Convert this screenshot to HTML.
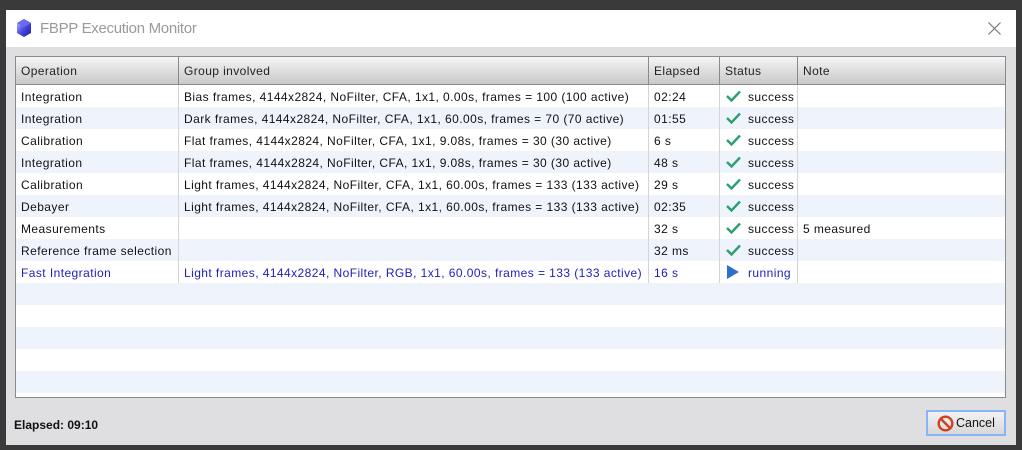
<!DOCTYPE html>
<html><head><meta charset="utf-8"><style>
*{margin:0;padding:0;box-sizing:border-box}
body{width:1022px;height:450px;background:#3a3a3a;position:relative;overflow:hidden;font-family:"Liberation Sans","DejaVu Sans",sans-serif;font-size:12px;color:#111}
.win{position:absolute;left:6px;top:10px;width:1010px;height:435px;background:#dfdfe1}
.title{position:absolute;left:0;top:0;width:1010px;height:37px;background:#fff}
.title .t{position:absolute;left:34px;top:10px;font-size:15px;letter-spacing:-0.3px;color:#9a9a9a}
.tbl{position:absolute;left:9px;top:46px;width:991px;height:342px;border:1px solid #8a8a8a;background:#fff;overflow:hidden}
.hdr{position:absolute;left:0;top:0;width:100%;height:28px;background:linear-gradient(#f5f5f5,#c9c9c9);border-bottom:1px solid #8a8a8a}
.hdr div{position:absolute;top:0;height:28px;line-height:29px;padding-left:5px;border-right:1px solid #8a8a8a;color:#222;letter-spacing:0.4px}
.row{position:absolute;left:0;width:100%;height:22px}
.row.a{background:#eff3fc}
.row div{position:absolute;top:0;height:22px;line-height:24px;padding-left:5px;border-right:1px solid #d4d4d4;white-space:nowrap;letter-spacing:0.43px}
.blue div{color:#2020c0}
.chk{position:absolute;left:6px;top:5px}
.st{padding-left:28px!important}
</style></head><body>
<div class="win">
 <div class="title">
  <svg style="position:absolute;left:10px;top:8px" width="16" height="20" viewBox="0 0 16 20"><defs><linearGradient id="g" x1="0" y1="0" x2="1" y2="1"><stop offset="0" stop-color="#c8c8ff"/><stop offset=".5" stop-color="#4a4ae8"/><stop offset="1" stop-color="#1a1a9a"/></linearGradient></defs><polygon points="8,1 15,5 15,15 8,19 1,15 1,5" fill="url(#g)"/><polygon points="8,1 15,5 8,9 1,5" fill="#6a6af0"/></svg>
  <div class="t">FBPP Execution Monitor</div>
  <svg style="position:absolute;left:982px;top:12px" width="13" height="13"><path d="M0.5 0.5L12.5 12.5M12.5 0.5L0.5 12.5" stroke="#777" stroke-width="1.2"/></svg>
 </div>
 <div class="tbl">
  <div class="hdr">
   <div style="left:0;width:163px">Operation</div>
   <div style="left:163px;width:470px">Group involved</div>
   <div style="left:633px;width:71px">Elapsed</div>
   <div style="left:704px;width:78px">Status</div>
   <div style="left:782px;width:210px;border-right:none">Note</div>
  </div>
  <div id="rows"></div>
 </div>
 <div style="position:absolute;left:8px;top:408px;font-weight:bold;font-size:12px">Elapsed: 09:10</div>
 <div style="position:absolute;left:920px;top:400px;width:80px;height:26px;border:2px solid #8ab4f8;background:linear-gradient(#f2f2f2,#d8d8d8)">
  <svg style="position:absolute;left:9px;top:3px" width="17" height="17" viewBox="0 0 17 17"><circle cx="8.5" cy="8.5" r="6.8" fill="none" stroke="#d04020" stroke-width="2.4"/><path d="M4 4L13 13" stroke="#d04020" stroke-width="2.4"/></svg>
  <div style="position:absolute;left:28px;top:4px;font-size:12.5px">Cancel</div>
 </div>
</div>
<script>
var d=[
["Integration","Bias frames, 4144x2824, NoFilter, CFA, 1x1, 0.00s, frames = 100 (100 active)","02:24","s",""],
["Integration","Dark frames, 4144x2824, NoFilter, CFA, 1x1, 60.00s, frames = 70 (70 active)","01:55","s",""],
["Calibration","Flat frames, 4144x2824, NoFilter, CFA, 1x1, 9.08s, frames = 30 (30 active)","6 s","s",""],
["Integration","Flat frames, 4144x2824, NoFilter, CFA, 1x1, 9.08s, frames = 30 (30 active)","48 s","s",""],
["Calibration","Light frames, 4144x2824, NoFilter, CFA, 1x1, 60.00s, frames = 133 (133 active)","29 s","s",""],
["Debayer","Light frames, 4144x2824, NoFilter, CFA, 1x1, 60.00s, frames = 133 (133 active)","02:35","s",""],
["Measurements","","32 s","s","5 measured"],
["Reference frame selection","","32 ms","s",""],
["Fast Integration","Light frames, 4144x2824, NoFilter, RGB, 1x1, 60.00s, frames = 133 (133 active)","16 s","r",""]];
var h="";
var chk='<svg class="chk" width="15" height="12" viewBox="0 0 15 12"><path d="M1 6L5.5 10.5L14 1.5" fill="none" stroke="#2aa070" stroke-width="2.4"/></svg>';
var run='<svg class="chk" width="14" height="14" viewBox="0 0 14 14" style="top:4px"><polygon points="1,0 13,7 1,14" fill="#3070c8"/></svg>';
for(var i=0;i<14;i++){var y=28+i*22;var c=(i%2?" a":"");
if(i<9){var r=d[i];c+=(r[3]=="r"?" blue":"");
h+='<div class="row'+c+'" style="top:'+y+'px"><div style="left:0;width:163px">'+r[0]+'</div><div style="left:163px;width:470px">'+r[1]+'</div><div style="left:633px;width:71px">'+r[2]+'</div><div class="st" style="left:704px;width:78px">'+(r[3]=="s"?chk:run)+(r[3]=="s"?"success":"running")+'</div><div style="left:782px;width:210px;border-right:none">'+r[4]+'</div></div>';}
else h+='<div class="row'+c+'" style="top:'+y+'px"></div>';}
document.getElementById("rows").innerHTML=h;
</script>
</body></html>
